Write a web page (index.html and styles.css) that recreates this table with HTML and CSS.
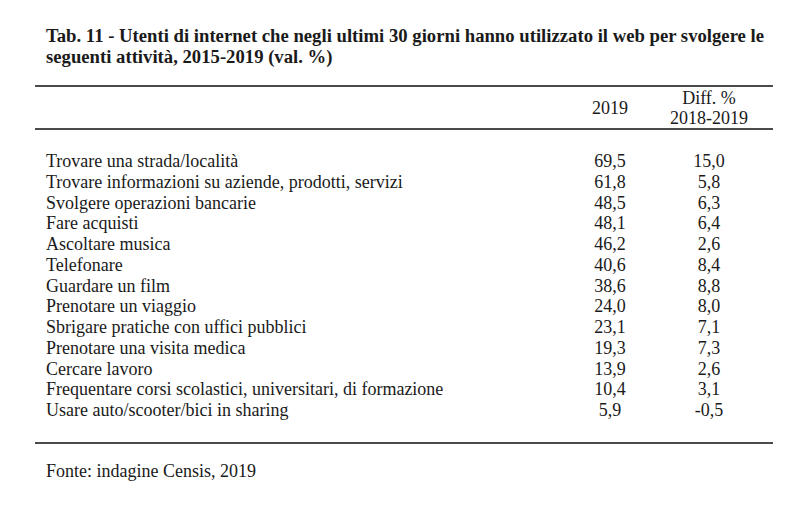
FILE: index.html
```html
<!DOCTYPE html>
<html lang="it">
<head>
<meta charset="utf-8">
<title>Tab. 11</title>
<link rel="stylesheet" href="styles.css">
</head>
<body>
<div class="page">
  <h1 class="title">Tab. 11 - Utenti di internet che negli ultimi 30 giorni hanno utilizzato il web per svolgere le seguenti attività, 2015-2019 (val. %)</h1>
  <div class="table">
    <div class="head">
      <div class="h-label"></div>
      <div class="h-col">2019</div>
      <div class="h-col">Diff. %<br>2018-2019</div>
    </div>
    <div class="body">
      <div class="row"><span class="label">Trovare una strada/località</span><span class="num">69,5</span><span class="num">15,0</span></div>
      <div class="row"><span class="label">Trovare informazioni su aziende, prodotti, servizi</span><span class="num">61,8</span><span class="num">5,8</span></div>
      <div class="row"><span class="label">Svolgere operazioni bancarie</span><span class="num">48,5</span><span class="num">6,3</span></div>
      <div class="row"><span class="label">Fare acquisti</span><span class="num">48,1</span><span class="num">6,4</span></div>
      <div class="row"><span class="label">Ascoltare musica</span><span class="num">46,2</span><span class="num">2,6</span></div>
      <div class="row"><span class="label">Telefonare</span><span class="num">40,6</span><span class="num">8,4</span></div>
      <div class="row"><span class="label">Guardare un film</span><span class="num">38,6</span><span class="num">8,8</span></div>
      <div class="row"><span class="label">Prenotare un viaggio</span><span class="num">24,0</span><span class="num">8,0</span></div>
      <div class="row"><span class="label">Sbrigare pratiche con uffici pubblici</span><span class="num">23,1</span><span class="num">7,1</span></div>
      <div class="row"><span class="label">Prenotare una visita medica</span><span class="num">19,3</span><span class="num">7,3</span></div>
      <div class="row"><span class="label">Cercare lavoro</span><span class="num">13,9</span><span class="num">2,6</span></div>
      <div class="row"><span class="label">Frequentare corsi scolastici, universitari, di formazione</span><span class="num">10,4</span><span class="num">3,1</span></div>
      <div class="row"><span class="label">Usare auto/scooter/bici in sharing</span><span class="num">5,9</span><span class="num">-0,5</span></div>
    </div>
  </div>
  <p class="source">Fonte: indagine Censis, 2019</p>
</div>
</body>
</html>
```
FILE: styles.css
```css
html, body {
  margin: 0;
  padding: 0;
  background: #ffffff;
}
body {
  font-family: "Liberation Serif", "Times New Roman", serif;
  color: #1a1a1a;
}
.page {
  width: 810px;
  height: 516px;
  padding: 25px 0 0 35px;
  box-sizing: border-box;
}
.title {
  margin: 0 0 0 11px;
  width: 745px;
  font-size: 18.7px;
  line-height: 21px;
  font-weight: bold;
}
.table {
  width: 738px;
  margin-top: 18px;
}
.head {
  display: grid;
  grid-template-columns: 540px 70px 128px;
  border-top: 2px solid #4a4a4a;
  border-bottom: 2px solid #4a4a4a;
  height: 41px;
  align-items: center;
  font-size: 18px;
  line-height: 20px;
}
.h-col {
  text-align: center;
}
.body {
  padding: 21px 0 21px;
  border-bottom: 2px solid #4a4a4a;
}
.row {
  display: grid;
  grid-template-columns: 540px 70px 128px;
  font-size: 18px;
  line-height: 20.75px;
}
.label {
  padding-left: 11px;
}
.num {
  text-align: center;
}
.source {
  margin: 17px 0 0 11px;
  font-size: 18px;
  line-height: 20px;
}
```
